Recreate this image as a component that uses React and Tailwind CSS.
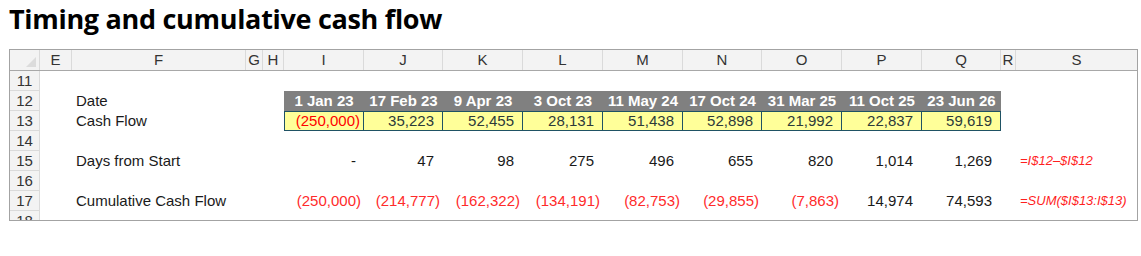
const cols = ['E', 'F', 'G', 'H', 'I', 'J', 'K', 'L', 'M', 'N', 'O', 'P', 'Q', 'R', 'S'];
const grid = 'grid grid-cols-[30px_32px_174px_17px_21px_80px_79px_80px_80px_80px_79px_80px_80px_79px_15px_1fr]';

const dates = ['1 Jan 23', '17 Feb 23', '9 Apr 23', '3 Oct 23', '11 May 24', '17 Oct 24', '31 Mar 25', '11 Oct 25', '23 Jun 26'];
const flows = ['(250,000)', '35,223', '52,455', '28,131', '51,438', '52,898', '21,992', '22,837', '59,619'];
const days = ['-', '47', '98', '275', '496', '655', '820', '1,014', '1,269'];
const cumul = ['(250,000)', '(214,777)', '(162,322)', '(134,191)', '(82,753)', '(29,855)', '(7,863)', '14,974', '74,593'];

const neg = (v) => v.startsWith('(');

function RowHead({ n }) {
  return (
    <div className="h-[20px] border-r border-b border-[#dadada] bg-[#f3f3f3] text-center leading-[20px] text-[#333]">
      {n}
    </div>
  );
}

function Blank() {
  return <div className="h-[20px]" />;
}

function Row({ n, label, children, note }) {
  return (
    <div className={grid}>
      <RowHead n={n} />
      <Blank />
      <div className="h-[20px] pl-[4px] leading-[20px] text-[#1a1a1a]">{label}</div>
      <Blank />
      <Blank />
      {children || Array.from({ length: 9 }).map((_, i) => <Blank key={i} />)}
      <Blank />
      <div className="h-[20px] pl-[4px] text-[13px] italic leading-[20px] text-[#ff1f1f]">{note}</div>
    </div>
  );
}

export default function App() {
  return (
    <div className="h-[256px] w-[1141px] bg-white font-['Liberation_Sans',Arial,sans-serif] text-[15px]">
      <h1 className="pl-[9px] font-['Open_Sans',sans-serif] text-[27px] font-bold leading-[38px] tracking-[-0.3px] text-black">
        Timing and cumulative cash flow
      </h1>
      <div className="ml-[9px] mt-[11px] h-[172px] w-[1129px] overflow-hidden border border-[#a3a3a3]">
        <div className={`${grid} h-[21px] border-b border-[#a8a8a8] bg-[#f3f3f3] text-[#333]`}>
          <div className="relative border-r border-[#dadada]">
            <div className="absolute bottom-[3px] right-[3px] h-0 w-0 border-b-[10px] border-l-[10px] border-b-[#dcdcdc] border-l-transparent" />
          </div>
          {cols.map((c) => (
            <div key={c} className="border-r border-[#dadada] text-center leading-[20px] last:border-r-0">
              {c}
            </div>
          ))}
        </div>

        <Row n="11" />

        <Row n="12" label="Date">
          {dates.map((d) => (
            <div key={d} className="h-[20px] bg-[#808080] text-center font-bold leading-[20px] text-white">
              {d}
            </div>
          ))}
        </Row>

        <Row n="13" label="Cash Flow">
          {flows.map((v, i) => (
            <div
              key={v}
              className={`h-[20px] border-y border-r border-[#1f5264] bg-[#ffff99] text-right leading-[18px] ${i === 0 ? 'border-l pr-[3px] text-[#ff0000]' : 'pr-[8px] text-[#2c3a3a]'}`}
            >
              {v}
            </div>
          ))}
        </Row>

        <Row n="14" />

        <Row n="15" label="Days from Start" note="=I$12–$I$12">
          {days.map((v) => (
            <div key={v} className={`h-[20px] text-right leading-[20px] text-[#1a1a1a] ${v === '-' ? 'pr-[8px]' : 'pr-[9px]'}`}>
              {v}
            </div>
          ))}
        </Row>

        <Row n="16" />

        <Row n="17" label="Cumulative Cash Flow" note="=SUM($I$13:I$13)">
          {cumul.map((v) => (
            <div key={v} className={`h-[20px] text-right leading-[20px] ${neg(v) ? 'pr-[3px] text-[#ff2b2b]' : 'pr-[9px] text-[#1a1a1a]'}`}>
              {v}
            </div>
          ))}
        </Row>

        <Row n="18" />
      </div>
    </div>
  );
}
